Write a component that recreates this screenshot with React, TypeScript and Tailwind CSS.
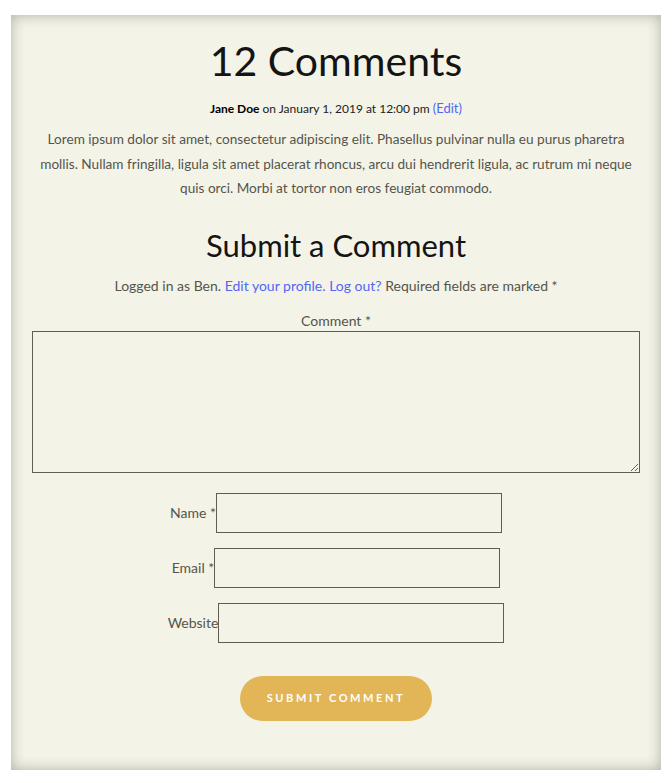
import React from 'react'

const font = { fontFamily: 'Lato, "Noto Sans", sans-serif' }

function Field({ label, required }: { label: string; required?: boolean }) {
  return (
    <div className="flex items-center justify-center">
      <label className="text-[14px] text-[#55554c]">
        {label}
        {required && ' *'}
      </label>
      <input
        type="text"
        className="h-[40px] w-[286px] border border-[#5e5e55] bg-transparent outline-none"
      />
    </div>
  )
}

export default function App() {
  return (
    <div className="min-h-screen bg-white pt-[15px]" style={font}>
      <div className="mx-[11px] flex h-[755px] flex-col items-center bg-[#f3f3e7] px-[21px] pt-[18px] shadow-[inset_0_0_14px_rgba(0,0,0,0.28)]">
        {/* Comments */}
        <h2 className="text-[41px] leading-[56px] text-[#141414]">12 Comments</h2>
        <div className="mt-[11px] text-[12px] leading-[16px] text-[#222]">
          <span className="font-bold text-black">Jane Doe</span> on January 1, 2019 at 12:00 pm{' '}
          <a className="text-[13px] text-[#5267f5]">(Edit)</a>
        </div>
        <p className="mt-[10px] text-center text-[13.6px] leading-[24.5px] text-[#55554c]">
          Lorem ipsum dolor sit amet, consectetur adipiscing elit. Phasellus pulvinar nulla eu purus pharetra
          mollis. Nullam fringilla, ligula sit amet placerat rhoncus, arcu dui hendrerit ligula, ac rutrum mi neque
          quis orci. Morbi at tortor non eros feugiat commodo.
        </p>

        {/* Form */}
        <h3 className="mt-[24px] text-[31px] leading-[40px] text-[#141414]">Submit a Comment</h3>
        <p className="mt-[11px] text-[14px] leading-[20px] text-[#55554c]">
          Logged in as Ben. <a className="text-[#5267f5]">Edit your profile.</a>{' '}
          <a className="text-[#5267f5]">Log out?</a> Required fields are marked *
        </p>
        <label className="mt-[15px] text-[14px] leading-[20px] text-[#55554c]">Comment *</label>
        <textarea className="h-[142px] w-full resize-y border border-[#5e5e55] bg-transparent outline-none" />

        <div className="mt-[20px] flex flex-col gap-[15px]">
          <Field label="Name" required />
          <Field label="Email" required />
          <Field label="Website" />
        </div>

        <button className="mt-[33px] h-[45px] w-[192px] rounded-full bg-[#e2b657] text-[11px] font-bold tracking-[2.6px] text-white">
          SUBMIT COMMENT
        </button>
      </div>
    </div>
  )
}
